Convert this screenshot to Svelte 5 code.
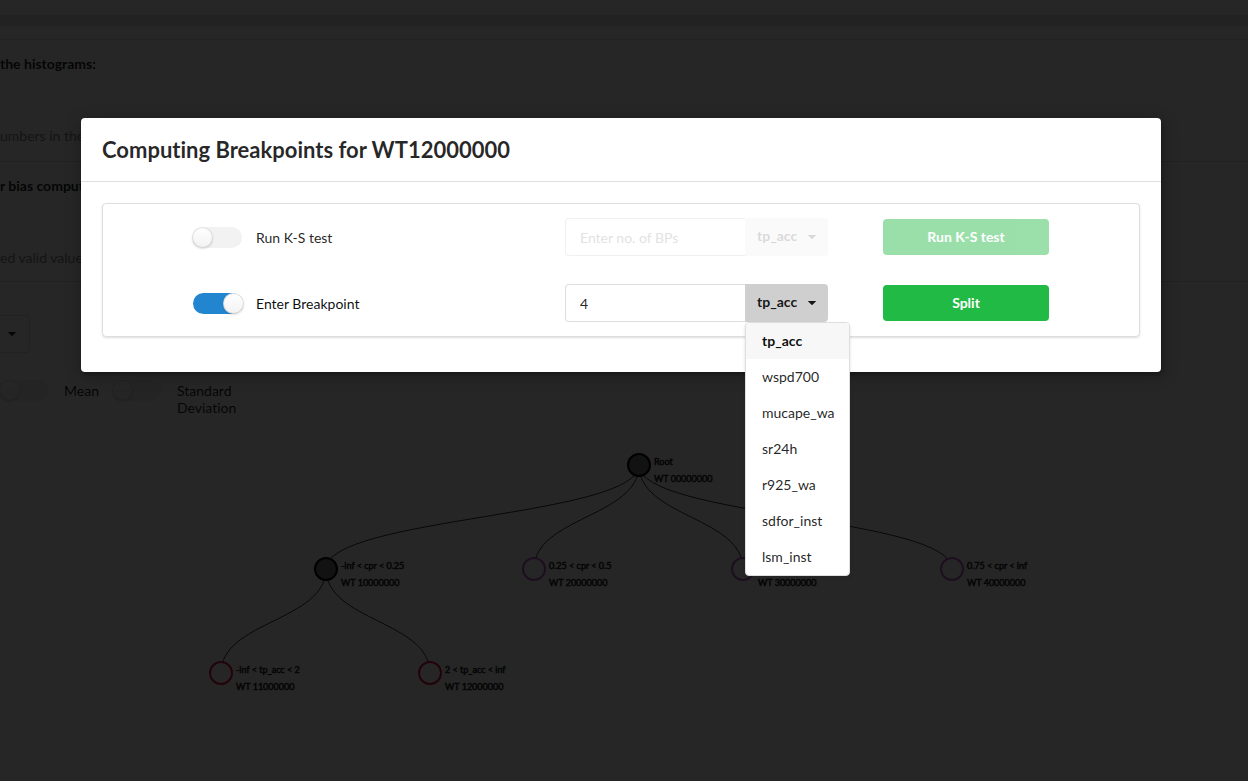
<script>
  const variables = ['tp_acc', 'wspd700', 'mucape_wa', 'sr24h', 'r925_wa', 'sdfor_inst', 'lsm_inst'];

  const nodes = [
    { id: 'root', x: 639, y: 25, parent: null, kind: 'filled', label: 'Root', code: 'WT 00000000' },
    { id: 'a', x: 326, y: 129, parent: 'root', kind: 'filled', label: '-inf < cpr < 0.25', code: 'WT 10000000' },
    { id: 'b', x: 534, y: 129, parent: 'root', kind: 'purple', label: '0.25 < cpr < 0.5', code: 'WT 20000000' },
    { id: 'c', x: 743, y: 129, parent: 'root', kind: 'purple', label: '', code: 'WT 30000000' },
    { id: 'd', x: 952, y: 129, parent: 'root', kind: 'purple', label: '0.75 < cpr < inf', code: 'WT 40000000' },
    { id: 'e', x: 221, y: 233, parent: 'a', kind: 'red', label: '-inf < tp_acc < 2', code: 'WT 11000000' },
    { id: 'f', x: 430, y: 233, parent: 'a', kind: 'red', label: '2 < tp_acc < inf', code: 'WT 12000000' }
  ];

  const links = nodes
    .filter((n) => n.parent)
    .map((n) => {
      const p = nodes.find((m) => m.id === n.parent);
      const mid = (p.y + n.y) / 2;
      return `M${n.x},${n.y}C${n.x},${mid} ${p.x},${mid} ${p.x},${p.y}`;
    });

  let runTest = $state(false);
  let enterBreakpoint = $state(true);
  let testCount = $state('');
  let breakpoint = $state('4');
  let testVariable = $state('tp_acc');
  let splitVariable = $state('tp_acc');
  let menuOpen = $state(true);

  function toggleMenu(event) {
    event.preventDefault();
    menuOpen = !menuOpen;
  }

  function choose(name) {
    splitVariable = name;
    menuOpen = false;
  }
</script>

{#snippet caret()}
  <svg class="caret" viewBox="0 0 8 4" aria-hidden="true"><path d="M.5 0h7q.8 0 .3.6L4.5 3.8q-.5.4-1 0L.2.6Q-.3 0 .5 0z" /></svg>
{/snippet}

<main class="page" inert>
  <div class="band"></div>
  <section class="first">
    <h2>the histograms:</h2>
    <p class="hint">umbers in the</p>
  </section>
  <section class="second">
    <h2>r bias comput</h2>
    <p class="hint">ed valid value</p>
  </section>
  <section class="options">
    <div class="picker">
      <select aria-label="Statistic"><option></option></select>
      {@render caret()}
    </div>
    <div class="stats">
      <label class="toggle mean"><input type="checkbox" /><span class="track"></span><span>Mean</span></label>
      <label class="toggle deviation"><input type="checkbox" /><span class="track"></span><span>Standard Deviation</span></label>
    </div>
  </section>
  <svg class="tree">
    {#each links as d}
      <path class="link" {d} />
    {/each}
    {#each nodes as n (n.id)}
      <g transform="translate({n.x},{n.y})">
        <circle class={n.kind} r="11" />
        {#if n.label}<text x="15" y="0">{n.label}</text>{/if}
        <text x="15" y="17">{n.code}</text>
      </g>
    {/each}
  </svg>
</main>

<div class="dimmer">
  <div class="modal" role="dialog" aria-modal="true" aria-labelledby="modal-title">
    <h1 id="modal-title">Computing Breakpoints for WT12000000</h1>
    <div class="content">
      <div class="segment">
        <label class="toggle">
          <input type="checkbox" bind:checked={runTest} /><span class="track"></span><span class="caption">Run K-S test</span>
        </label>
        <div class="field" class:disabled={!runTest}>
          <input type="text" aria-label="Number of breakpoints" placeholder="Enter no. of BPs" bind:value={testCount} disabled={!runTest} />
          <div class="dropdown">
            <select aria-label="Test variable" bind:value={testVariable} disabled={!runTest}>
              {#each variables as name}<option value={name}>{name}</option>{/each}
            </select>
            {@render caret()}
          </div>
        </div>
        <button class="action" disabled={!runTest}>Run K-S test</button>

        <label class="toggle">
          <input type="checkbox" bind:checked={enterBreakpoint} /><span class="track"></span><span class="caption">Enter Breakpoint</span>
        </label>
        <div class="field">
          <input type="text" aria-label="Breakpoint" bind:value={breakpoint} disabled={!enterBreakpoint} />
          <div class="dropdown" class:open={menuOpen}>
            <select aria-label="Split variable" bind:value={splitVariable} onmousedown={toggleMenu}>
              {#each variables as name}<option value={name}>{name}</option>{/each}
            </select>
            {@render caret()}
            {#if menuOpen}
              <div class="menu">
                {#each variables as name}
                  <button class:selected={name === splitVariable} onclick={() => choose(name)}>{name}</button>
                {/each}
              </div>
            {/if}
          </div>
        </div>
        <button class="action" disabled={!enterBreakpoint}>Split</button>
      </div>
    </div>
  </div>
</div>

<style>
  :global(body) {
    background: #fff;
    color: rgba(0, 0, 0, 0.87);
    font: 14px/18px Lato, sans-serif;
    font-variant-ligatures: none;
  }

  :global(#app) {
    position: relative;
    min-height: 100vh;
    overflow: hidden;
  }

  * {
    box-sizing: border-box;
  }

  h1,
  h2,
  p {
    margin: 0;
  }

  input,
  select,
  button {
    font: inherit;
    font-variant-ligatures: none;
    color: inherit;
    margin: 0;
  }

  select {
    appearance: none;
    border: 0;
    background: none;
    outline: 0;
  }

  .caret {
    width: 8px;
    height: 4px;
    fill: currentColor;
    pointer-events: none;
  }

  /* Page behind the dialog */
  .page {
    padding-top: 15px;
  }

  .band {
    height: 11px;
    margin-bottom: 13px;
    background: #e2e2e2;
  }

  section {
    border-top: 1px solid #dededf;
  }

  .first {
    height: 122px;
    padding-top: 15px;
  }

  .second {
    height: 120px;
    padding-top: 15px;
  }

  h2 {
    font-size: 14px;
    line-height: 18px;
    margin-bottom: 54px;
  }

  .hint {
    color: #888;
  }

  .options {
    height: 159px;
    padding-top: 33px;
  }

  .picker {
    display: flex;
    align-items: center;
    justify-content: flex-end;
    width: 30px;
    height: 38px;
    padding-right: 13px;
    border: 1px solid #dededf;
    border-left: 0;
    border-radius: 0 4px 4px 0;
  }

  .picker select {
    width: 6px;
    padding: 0;
  }

  .stats {
    display: flex;
    align-items: flex-start;
    margin-top: 27px;
  }

  .stats .toggle {
    align-items: flex-start;
    gap: 15px;
    line-height: 17px;
  }

  .stats .toggle span:last-child {
    padding-top: 2px;
  }

  .mean {
    width: 113px;
  }

  .deviation {
    width: 140px;
  }

  .tree {
    display: block;
    width: 100%;
    height: 300px;
    overflow: visible;
  }

  .link {
    fill: none;
    stroke: #333;
    stroke-width: 1px;
  }

  circle {
    fill: #fff;
    stroke-width: 2px;
  }

  .filled {
    fill: #777;
    stroke: #000;
  }

  .purple {
    stroke: #c060d0;
  }

  .red {
    stroke: #e01840;
  }

  text {
    font-size: 9px;
    fill: #222;
    stroke: #222;
    stroke-width: 0.5px;
  }

  /* Toggle switch */
  .toggle {
    display: flex;
    align-items: center;
    gap: 14px;
    cursor: pointer;
  }

  .toggle input {
    position: absolute;
    opacity: 0;
  }

  .caption {
    padding-top: 2px;
  }

  .track {
    position: relative;
    flex: none;
    width: 49px;
    height: 21px;
    border-radius: 11px;
    background: #f2f2f2;
  }

  .track::after {
    content: '';
    position: absolute;
    top: 0;
    left: -1px;
    width: 21px;
    height: 21px;
    border-radius: 50%;
    background: #fff linear-gradient(transparent, rgba(0, 0, 0, 0.05));
    box-shadow: 0 1px 2px rgba(34, 36, 38, 0.15), inset 0 0 0 1px rgba(34, 36, 38, 0.15);
  }

  .toggle input:checked + .track {
    background: #2185d0;
  }

  .toggle input:checked + .track::after {
    left: 30px;
  }

  .toggle input:checked ~ span {
    color: rgba(0, 0, 0, 0.95);
  }

  /* Dialog */
  .dimmer {
    position: absolute;
    inset: 0;
    padding: 118px 87px 0 81px;
    background: rgba(0, 0, 0, 0.85);
  }

  .modal {
    border-radius: 4px;
    background: #fff;
    box-shadow: 1px 3px 3px rgba(0, 0, 0, 0.2), 1px 3px 15px 2px rgba(0, 0, 0, 0.2);
  }

  h1 {
    padding: 18px 21px 17px;
    border-bottom: 1px solid rgba(34, 36, 38, 0.15);
    font-size: 22px;
    line-height: 28px;
    color: rgba(0, 0, 0, 0.85);
  }

  .content {
    padding: 21px 21px 35px;
  }

  .segment {
    display: grid;
    grid-template-columns: 372fr 318fr 166fr;
    align-items: center;
    row-gap: 28px;
    padding: 14px 90px;
    border: 1px solid rgba(34, 36, 38, 0.15);
    border-radius: 4px;
    box-shadow: 0 1px 2px rgba(34, 36, 38, 0.15);
  }

  .field {
    display: flex;
    width: 263px;
    height: 38px;
  }

  .field.disabled {
    opacity: 0.45;
  }

  .field > input {
    flex: 1;
    min-width: 0;
    padding: 2px 14px 0;
    border: 1px solid rgba(34, 36, 38, 0.15);
    border-right: 0;
    border-radius: 4px 0 0 4px;
    background: #fff;
    outline: 0;
  }

  .field > input::placeholder {
    color: #bfbfbf;
  }

  .dropdown {
    position: relative;
    display: flex;
    align-items: center;
    width: 83px;
    border-radius: 0 4px 4px 0;
    background: #e8e8e8;
    color: rgba(0, 0, 0, 0.6);
  }

  .disabled .dropdown {
    background: #f5f5f5;
  }

  .disabled select,
  .disabled .caret {
    opacity: 0.5;
  }

  .dropdown.open {
    background: #cfcfcf;
    color: rgba(0, 0, 0, 0.9);
  }

  .dropdown select {
    width: 100%;
    height: 38px;
    padding: 0 12px 2px;
    font-weight: 700;
    cursor: pointer;
  }

  .dropdown .caret {
    position: absolute;
    right: 12px;
  }

  .menu {
    position: absolute;
    top: 100%;
    left: 0;
    border: 1px solid #dededf;
    border-radius: 4px;
    background: #fff;
    box-shadow: 0 2px 3px rgba(34, 36, 38, 0.15);
    overflow: hidden;
  }

  .menu button {
    display: block;
    width: 100%;
    height: 36px;
    padding: 0 14px 0 16px;
    border: 0;
    background: none;
    color: rgba(0, 0, 0, 0.87);
    text-align: left;
    white-space: nowrap;
    cursor: pointer;
  }

  .menu .selected {
    background: #f7f7f7;
    color: rgba(0, 0, 0, 0.95);
    font-weight: 700;
  }

  .action {
    height: 36px;
    border: 0;
    border-radius: 4px;
    background: #21ba45;
    color: #fff;
    font-weight: 700;
    cursor: pointer;
  }

  .action:disabled {
    opacity: 0.45;
  }
</style>
